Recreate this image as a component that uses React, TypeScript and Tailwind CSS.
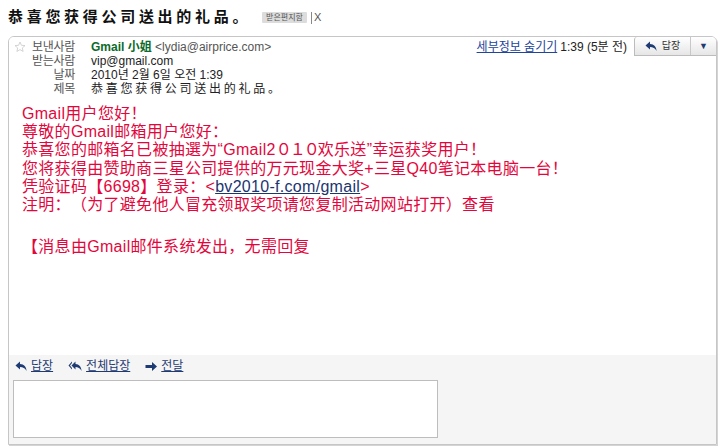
import React from 'react';

const kr = "font-['Liberation_Sans','Noto_Sans_CJK_KR',sans-serif]";
const sc = "font-['Liberation_Sans','Noto_Sans_CJK_SC',sans-serif]";

function Star() {
    return (
        <svg width="12" height="12" viewBox="0 0 24 24" className="mt-[1px]">
            <path d="M12 2l2.9 6.6 7.1.6-5.4 4.7 1.6 7-6.2-3.7-6.2 3.7 1.6-7L2 9.2l7.1-.6z" fill="none" stroke="#c9c9c9" strokeWidth="1.6" strokeLinejoin="round" />
        </svg>
    );
}

function ReplyIcon() {
    return (
        <svg width="13" height="11" viewBox="0 0 13 11">
            <path d="M5 0.5 L0.5 4.5 L5 8.5 V6 C8 6 10 7 11.5 10 C11.5 6 9 3 5 3 Z" fill="#1f3b73" />
        </svg>
    );
}

function ReplyAllIcon() {
    return (
        <svg width="15" height="11" viewBox="0 0 15 11">
            <path d="M4 0.5 L0.5 4.5 L4 8.5 V7 L2 4.5 L4 2 Z" fill="#1f3b73" />
            <path d="M7.5 0.5 L3.5 4.5 L7.5 8.5 V6 C10 6 12 7 13.5 10 C13.5 6 11 3 7.5 3 Z" fill="#1f3b73" />
        </svg>
    );
}

function ForwardIcon() {
    return (
        <svg width="13" height="11" viewBox="0 0 13 11">
            <path d="M0.5 4 H7 V1 L12 5.5 L7 10 V7 H0.5 Z" fill="#1f3b73" />
        </svg>
    );
}

export default function App() {
    const rows = [
        { label: '보낸사람', star: true },
        { label: '받는사람' },
        { label: '날짜' },
        { label: '제목' },
    ];

    return (
        <div className={`w-[720px] h-[447px] bg-white overflow-hidden [text-spacing-trim:space-all] ${kr} text-[#222]`}>
            <div className="flex items-center h-[36px] pl-[8px] pb-[1px]">
                <h1 className={`text-[15px] font-bold tracking-[3.7px] text-[#111] ${sc}`}>恭喜您获得公司送出的礼品。</h1>
                <span className="ml-[11px] bg-[#dcdcdc] text-[#555] text-[8px] leading-[11px] px-[4px] rounded-[1px]">받은편지함</span>
                <span className="ml-[4px] h-[12px] border-l border-[#888]" />
                <span className="ml-[2px] text-[11px] text-[#555]">X</span>
            </div>

            <div className="ml-[8px] mr-[3px] h-[409px] flex flex-col border border-[#c6c6c6] rounded-tl-[6px] rounded-tr-[6px] shadow-[1px_1px_0_#d4d4d4] overflow-hidden">
                <div className="flex-1 bg-white flex flex-col">
                    <div className="flex justify-between">
                        <div className="pl-[5px] pt-[3px] grid grid-cols-[14px_47px_auto] text-[12px] leading-[14px]">
                            {rows.map((r, i) => (
                                <React.Fragment key={i}>
                                    <div className="flex items-start">{r.star && <Star />}</div>
                                    <div className="text-right text-[#555] tracking-[-0.3px]">{r.label}</div>
                                    <div className="pl-[16px] whitespace-nowrap">
                                        {i === 0 && (
                                            <>
                                                <span className="text-[#0b6b2b] font-bold">Gmail 小姐</span>{' '}
                                                <span className="text-[#555]">&lt;lydia@airprice.com&gt;</span>
                                            </>
                                        )}
                                        {i === 1 && <span>vip@gmail.com</span>}
                                        {i === 2 && <span>2010년 2월 6일 오전 1:39</span>}
                                        {i === 3 && <span className={`tracking-[2.75px] ${sc}`}>恭喜您获得公司送出的礼品。</span>}
                                    </div>
                                </React.Fragment>
                            ))}
                        </div>
                        <div className="flex items-start text-[12px] leading-[14px]">
                            <a className="mt-[3px] text-[#22449a] underline">세부정보 숨기기</a>
                            <span className="mt-[3px] ml-[3px] whitespace-nowrap">1:39 (5분 전)</span>
                            <div className="ml-[7px] flex h-[19px] border-l border-b border-[#bcbcbc] rounded-tl-[3px] bg-gradient-to-b from-white to-[#e6e6e6]">
                                <div className="w-[56px] flex items-center justify-center gap-[4px] border-r border-[#c8c8c8]">
                                    <ReplyIcon />
                                    <span className="text-[10px] text-[#333]">답장</span>
                                </div>
                                <div className="w-[25px] flex items-center justify-center text-[9px] text-[#1f3b73]">▼</div>
                            </div>
                        </div>
                    </div>

                    <div className={`pl-[13px] pt-[9px] text-[16px] leading-[18.2px] tracking-[0.3px] text-[#e3063c] ${sc}`}>
                        <div>Gmail用户您好！</div>
                        <div>尊敬的Gmail邮箱用户您好：</div>
                        <div>恭喜您的邮箱名已被抽選为“Gmail2<span className="tracking-[-2px]">０１０</span>欢乐送”幸运获奖用户！</div>
                        <div>您将获得由赞助商三星公司提供的万元现金大奖+三星Q40笔记本电脑一台！</div>
                        <div>
                            凭验证码【6698】登录：&lt;<a className="text-[#1a3570] underline">bv2010-f.com/gmail</a>&gt;
                        </div>
                        <div>注明：（为了避免他人冒充领取奖项请您复制活动网站打开）查看</div>
                        <div className="mt-[24px]">【消息由Gmail邮件系统发出，无需回复</div>
                    </div>
                </div>

                <div className="h-[89px] bg-[#f5f5f5] flex flex-col">
                    <div className="h-[22px] pl-[6px] flex items-center text-[12px] text-[#1f3b73]">
                        <span className="flex items-center gap-[3px]">
                            <ReplyIcon />
                            <span className="underline">답장</span>
                        </span>
                        <span className="ml-[15px] flex items-center gap-[3px]">
                            <ReplyAllIcon />
                            <span className="underline">전체답장</span>
                        </span>
                        <span className="ml-[15px] flex items-center gap-[3px]">
                            <ForwardIcon />
                            <span className="underline">전달</span>
                        </span>
                    </div>
                    <div className="mt-[3px] ml-[4px] w-[425px] h-[58px] bg-white border border-[#bdbdbd]" />
                </div>
            </div>
        </div>
    );
}
